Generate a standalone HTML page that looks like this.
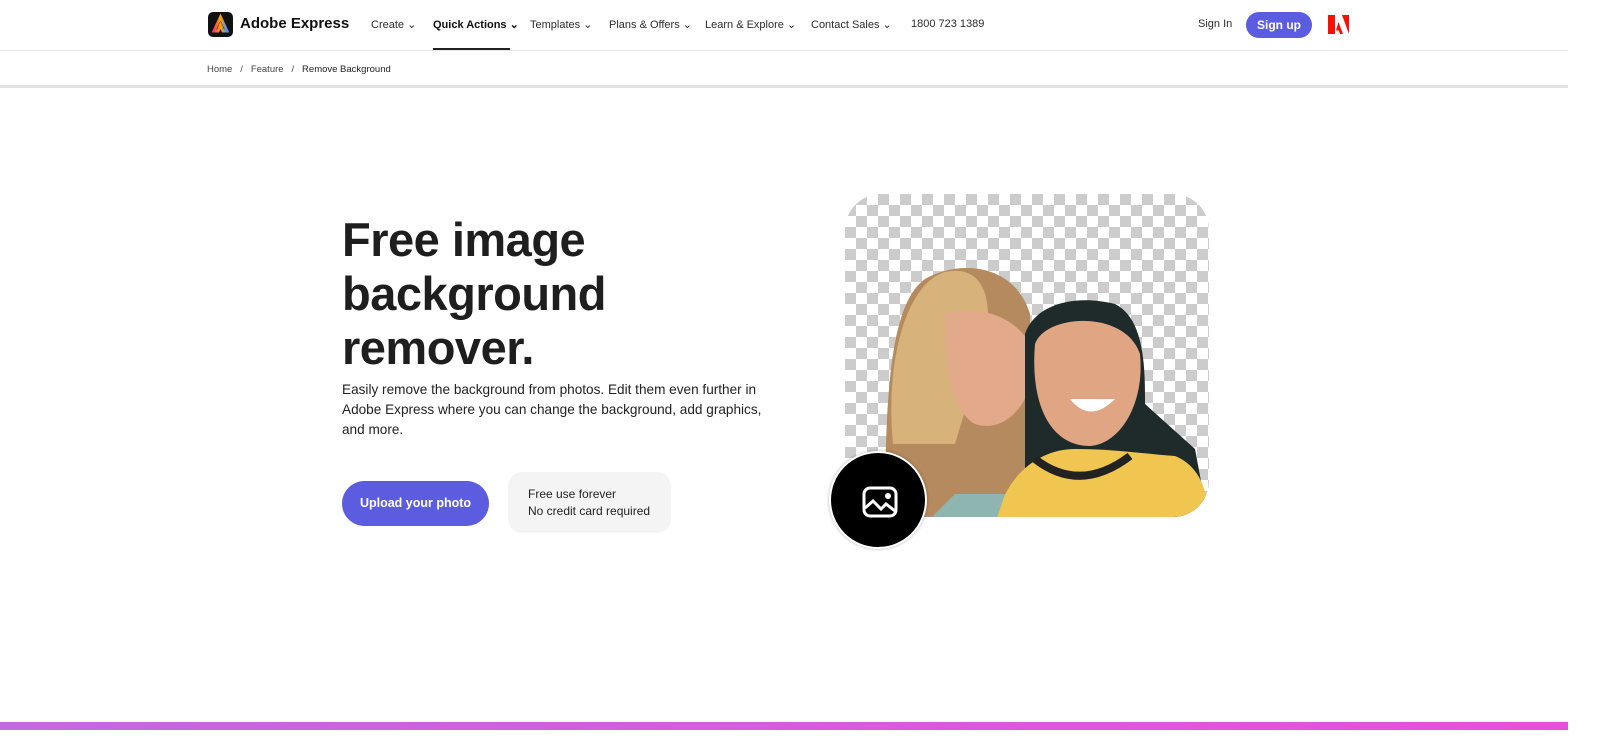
<!DOCTYPE html>
<html><head><meta charset="utf-8"><style>
*{margin:0;padding:0;box-sizing:border-box}
body{width:1600px;height:746px;background:#fff;font-family:"Liberation Sans",sans-serif;color:#2c2c2c;position:relative;overflow:hidden}
.nav{position:absolute;top:0;left:0;width:1568px;height:51px;border-bottom:1px solid #e6e6e6}
.nav span{position:absolute;top:18px;font-size:11px;color:#2c2c2c;white-space:nowrap}
.crumb{position:absolute;top:52px;left:0;width:1568px;height:36px;border-bottom:3px solid #e2e2e2}
.crumb span{position:absolute;top:12px;font-size:9.5px;color:#444}
.scroll{position:absolute;right:0;top:0;width:32px;height:746px;background:#fff}
h1{position:absolute;left:342px;top:213px;font-size:47px;line-height:54px;font-weight:bold;color:#1e1e1e;letter-spacing:-0.5px}
p.d{position:absolute;left:342px;top:380px;width:440px;font-size:13.6px;line-height:20px;color:#222}
.btn{position:absolute;left:342px;top:481px;width:147px;height:45px;border-radius:23px;background:#5c5ce0;color:#fff;font-size:12.5px;font-weight:bold;text-align:center;line-height:45px}
.free{position:absolute;left:508px;top:472px;width:163px;height:61px;border-radius:14px;background:#f4f4f4;font-size:12px;line-height:17px;padding:14px 0 0 20px;color:#222}
.img{position:absolute;left:845px;top:194px;width:364px;height:323px;border-radius:36px;overflow:hidden;
background-color:#fff;background-image:linear-gradient(45deg,#ccc 25%,transparent 25%,transparent 75%,#ccc 75%),linear-gradient(45deg,#ccc 25%,transparent 25%,transparent 75%,#ccc 75%);background-size:22px 22px;background-position:0 0,11px 11px}
.circ{position:absolute;left:829px;top:451px;width:98px;height:98px;border-radius:50%;background:#000;border:2px solid #fff;box-shadow:0 0 3px rgba(0,0,0,.3)}
.bar{position:absolute;left:0;top:722px;width:1568px;height:8px;background:linear-gradient(90deg,#c06ae0,#e94fd8)}
</style></head><body>
<div class="nav">
<div style="position:absolute;left:208px;top:12px;width:25px;height:25px;background:#111;border-radius:5px"><svg width="25" height="25" viewBox="0 0 25 25"><path d="M12.5 5 L6 19 H10 L12.5 13 L15 19 H19 Z" fill="none" stroke="url(#g)" stroke-width="3"/><defs><linearGradient id="g" x1="0" x2="1"><stop offset="0" stop-color="#ff3c6e"/><stop offset=".5" stop-color="#ffa400"/><stop offset="1" stop-color="#4d8cff"/></linearGradient></defs></svg></div>
<span style="left:240px;top:15px;font-size:15px;font-weight:bold;color:#111">Adobe Express</span>
<span style="left:371px">Create ⌄</span>
<span style="left:433px;font-weight:bold;color:#111">Quick Actions ⌄</span>
<div style="position:absolute;left:433px;top:48px;width:77px;height:2px;background:#222"></div>
<span style="left:530px">Templates ⌄</span>
<span style="left:609px">Plans &amp; Offers ⌄</span>
<span style="left:705px">Learn &amp; Explore ⌄</span>
<span style="left:811px">Contact Sales ⌄</span>
<span style="left:911px">1800 723 1389</span>
<span style="left:1198px">Sign In</span>
<div style="position:absolute;left:1246px;top:12px;width:66px;height:26px;border-radius:13px;background:#5c5ce0;color:#fff;font-size:12px;font-weight:bold;text-align:center;line-height:26px">Sign up</div>
<svg style="position:absolute;left:1328px;top:15px" width="21" height="19" viewBox="0 0 21 19"><path d="M0 0H7V19H0Z M14 0H21V19Z M10.5 7 L15 19 H12 L10.8 15.5 H8 Z" fill="#fa0f00"/><path d="M7 0 L0 19 V0Z" fill="#fa0f00"/></svg>
</div>
<div class="crumb"><span style="left:207px">Home &nbsp;&nbsp;/&nbsp;&nbsp; Feature &nbsp;&nbsp;/&nbsp;&nbsp; <b style="font-weight:normal;color:#222">Remove Background</b></span></div>
<h1>Free image<br>background<br>remover.</h1>
<p class="d">Easily remove the background from photos. Edit them even further in Adobe Express where you can change the background, add graphics, and more.</p>
<div class="btn">Upload your photo</div>
<div class="free">Free use forever<br>No credit card required</div>
<div class="img">
<svg width="364" height="323" viewBox="0 0 364 323" style="position:absolute;left:0;top:0">
<path d="M40 330 C40 200 45 110 80 85 C115 65 170 70 185 120 L185 330Z" fill="#b48a5e"/>
<path d="M48 250 C40 170 60 90 100 78 C135 70 150 100 140 150 L110 250Z" fill="#d7b27a"/>
<path d="M100 120 C130 110 175 120 190 160 C190 210 160 240 130 230 C110 220 100 180 100 120Z" fill="#e2a98a"/>
<path d="M180 330 L180 140 C190 110 230 100 270 110 C300 125 300 175 300 210 L350 255 L364 330Z" fill="#1f2a2a"/>
<path d="M190 150 C200 120 280 115 295 160 C300 210 275 250 245 252 C205 252 185 210 190 150Z" fill="#e0a684"/>
<path d="M225 205 Q245 230 270 205 Z" fill="#fff"/>
<path d="M150 330 C160 280 195 255 230 255 C270 255 300 260 330 262 C350 270 364 290 364 330Z" fill="#f0c550"/>
<path d="M190 265 Q235 300 285 262" fill="none" stroke="#222" stroke-width="8"/>
<path d="M80 330 L110 300 L160 300 L150 330Z" fill="#8fb5b0"/>
</svg>
</div>
<div class="circ"><svg style="position:absolute;left:31px;top:31px" width="36" height="36" viewBox="0 0 36 36"><rect x="2" y="4" width="32" height="28" rx="6" fill="none" stroke="#fff" stroke-width="3"/><path d="M3 24 L11 17 L19 25 L24 20 L33 27" fill="none" stroke="#fff" stroke-width="3"/><circle cx="26" cy="12" r="3" fill="#fff"/></svg></div>
<div class="bar"></div>
<div class="scroll"></div>
</body></html>
